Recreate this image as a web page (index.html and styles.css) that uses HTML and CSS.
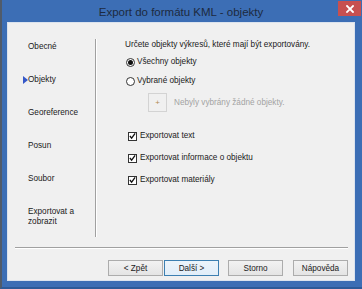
FILE: index.html
```html
<!DOCTYPE html>
<html lang="cs">
<head>
<meta charset="utf-8">
<title>Export do formátu KML - objekty</title>
<link rel="stylesheet" href="styles.css">
</head>
<body>
<div class="window">
  <div class="titlebar">
    <span class="title">Export do formátu KML - objekty</span>
    <button class="close" type="button">
      <svg width="8" height="8" viewBox="0 0 8 8"><path d="M1 1 L7 7 M7 1 L1 7" stroke="#fff" stroke-width="1.8" stroke-linecap="square"/></svg>
    </button>
  </div>
  <div class="client">
    <div class="main">
      <nav class="nav">
        <div class="nav-item">Obecné</div>
        <div class="nav-item active">Objekty</div>
        <div class="nav-item">Georeference</div>
        <div class="nav-item">Posun</div>
        <div class="nav-item">Soubor</div>
        <div class="nav-item">Exportovat a<br>zobrazit</div>
      </nav>
      <div class="vdivider"></div>
      <section class="content">
        <div class="heading">Určete objekty výkresů, které mají být exportovány.</div>
        <label class="radio-row first"><span class="radio checked"></span>Všechny objekty</label>
        <label class="radio-row"><span class="radio"></span>Vybrané objekty</label>
        <div class="pick-row">
          <span class="pick-btn">+</span>
          <span class="pick-text">Nebyly vybrány žádné objekty.</span>
        </div>
        <label class="check-row first"><span class="check"><svg width="8" height="8" viewBox="0 0 8 8"><path d="M1 4 L3 6.5 L7 1" fill="none" stroke="#111" stroke-width="1.5"/></svg></span>Exportovat text</label>
        <label class="check-row"><span class="check"><svg width="8" height="8" viewBox="0 0 8 8"><path d="M1 4 L3 6.5 L7 1" fill="none" stroke="#111" stroke-width="1.5"/></svg></span>Exportovat informace o objektu</label>
        <label class="check-row"><span class="check"><svg width="8" height="8" viewBox="0 0 8 8"><path d="M1 4 L3 6.5 L7 1" fill="none" stroke="#111" stroke-width="1.5"/></svg></span>Exportovat materiály</label>
      </section>
    </div>
    <div class="hsep"></div>
    <div class="buttons">
      <button class="btn" type="button">&lt; Zpět</button>
      <button class="btn default" type="button">Další &gt;</button>
      <button class="btn storno" type="button">Storno</button>
      <button class="btn help" type="button">Nápověda</button>
    </div>
  </div>
</div>
</body>
</html>
```
FILE: styles.css
```css
* { box-sizing: border-box; }
html, body { margin: 0; padding: 0; }
body {
  background: #3b6db4;
  font-family: "Liberation Sans", Arial, sans-serif;
  font-size: 8.2px;
  color: #1a1a1a;
}
.window {
  width: 362px;
  height: 289px;
  background: #3c6eb5;
  border-left: 2px solid #505b6a;
  border-bottom: 2px solid #2d5a98;
  padding: 0 7px 6px 5px;
  display: flex;
  flex-direction: column;
}
.titlebar {
  height: 22px;
  position: relative;
  display: flex;
  align-items: center;
  justify-content: center;
}
.title {
  font-size: 11.5px;
  color: #1c2a40;
  margin-top: 2px;
}
.close {
  position: absolute;
  right: -6px;
  top: 1px;
  width: 23px;
  height: 15px;
  border: none;
  padding: 0;
  background: #c75050;
  display: flex;
  align-items: center;
  justify-content: center;
}
.client {
  flex: 1;
  background: #f0f0f0;
  border: 1px solid #dbe3ee;
  display: flex;
  flex-direction: column;
}
.main {
  height: 224px;
  display: flex;
}
.nav {
  width: 87px;
  padding: 19px 0 0 20px;
}
.nav-item {
  height: 33px;
  line-height: 10px;
  position: relative;
}
.nav-item.active::before {
  content: "";
  position: absolute;
  left: -5px;
  top: 1px;
  border-left: 5px solid #3558c8;
  border-top: 4px solid transparent;
  border-bottom: 4px solid transparent;
}
.vdivider {
  width: 2px;
  margin-top: 16px;
  height: 198px;
  border-left: 1px solid #a0a0a0;
  border-right: 1px solid #ffffff;
}
.content {
  flex: 1;
  padding-left: 28px;
  display: flex;
  flex-direction: column;
  align-items: flex-start;
}
.heading {
  margin-top: 17px;
  line-height: 10px;
  height: 10px;
}
.radio-row, .check-row {
  display: flex;
  align-items: center;
  height: 12px;
  line-height: 12px;
}
.radio-row { margin-top: 7px; }
.radio-row.first { margin-top: 6px; }
.radio {
  width: 9px;
  height: 9px;
  border: 1px solid #333;
  border-radius: 50%;
  background: #fff;
  margin: 0 2px 0 1px;
  display: flex;
  align-items: center;
  justify-content: center;
}
.radio.checked::after {
  content: "";
  width: 5px;
  height: 5px;
  border-radius: 50%;
  background: #111;
}
.pick-row {
  margin: 6px 0 0 23px;
  display: flex;
  align-items: center;
  height: 19px;
}
.pick-btn {
  width: 19px;
  height: 19px;
  border: 1px solid #d3d3d3;
  background: #f0f0f0;
  color: #b08a50;
  font-size: 8px;
  display: flex;
  align-items: center;
  justify-content: center;
}
.pick-text {
  margin-left: 7px;
  color: #a3a3a3;
}
.check-row { margin-top: 10px; }
.check-row.first { margin-top: 18px; }
.check {
  width: 9px;
  height: 9px;
  border: 1px solid #333;
  background: #fff;
  margin: 0 3px 0 3px;
  display: flex;
  align-items: center;
  justify-content: center;
}
.hsep {
  height: 2px;
  margin: 0 6px 0 7px;
  border-top: 1px solid #a0a0a0;
  border-bottom: 1px solid #ffffff;
}
.buttons {
  margin-top: 11px;
  display: flex;
  justify-content: flex-end;
  padding-right: 6px;
}
.btn {
  width: 55px;
  height: 16px;
  padding: 0;
  font-family: inherit;
  font-size: 8.2px;
  color: #1a1a1a;
  border: 1px solid #acacac;
  background: linear-gradient(#f2f2f2, #e4e4e4);
}
.btn.default {
  margin-left: 1px;
  border-color: #3c7fb1;
  background: linear-gradient(#ecf4fb, #e1eef9);
}
.btn.storno { margin-left: 9px; }
.btn.help { margin-left: 10px; }
```
